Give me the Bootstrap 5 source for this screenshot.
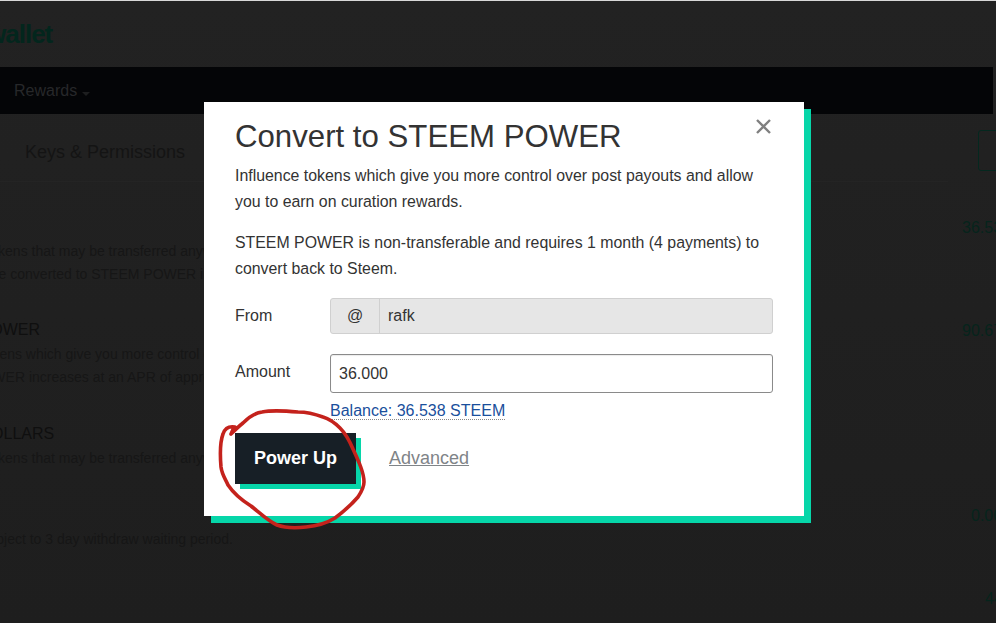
<!DOCTYPE html>
<html lang="en">
<head>
<meta charset="utf-8">
<title>Convert to STEEM POWER</title>
<link href="https://cdn.jsdelivr.net/npm/bootstrap@5.3.0/dist/css/bootstrap.min.css" rel="stylesheet">
<style>
html,body{height:100%;overflow:hidden}
body{background:#1f1f1f;font-family:"Liberation Sans",Arial,sans-serif;color:#333}
.stage{position:relative;width:996px;height:623px;overflow:hidden;border-top:1px solid #d8d8d8;background:linear-gradient(#222222,#1e1e1e)}
.hdr{height:66px;overflow:hidden}
.logo{font-size:26px;font-weight:700;line-height:66px;color:#03261d;margin-left:-14px;letter-spacing:-1px}
.blackbar{height:47px;width:993px;background:#040507;color:#27282a;font-size:16px;line-height:47px;padding-left:14px}
.caret{display:inline-block;width:0;height:0;border-left:4px solid transparent;border-right:4px solid transparent;border-top:4px solid #1d1e1f;margin-left:5px;vertical-align:0}
.bgwrap{height:68px;width:948px;border-bottom:1px solid #242424;padding:25px 0 0 25px;font-size:18px;line-height:27px;color:#141414}
.leftcol{width:700px;margin-left:-80px;color:#161616;font-size:14px;padding-top:58px}
.bgline{height:23px;line-height:23px;white-space:nowrap}
.bghead{font-size:16px;color:#0f0f0f;line-height:26px;height:26px}
.gap1{margin-top:31px}
.gap2{margin-top:32px}
.gap3{margin-top:58px}
.num{font-size:16px;line-height:20px;color:#06241c;white-space:nowrap;position:absolute}
.outlinebtn{position:absolute;left:978px;top:129px;width:40px;height:41px;border:1px solid #04281f;border-radius:3px}
.dlg{position:absolute;left:204px;top:101px;width:600px;height:414px;background:#fff;box-shadow:7px 7px 0 #06d6a9;padding:17px 31px 0 31px}
.dlgtitle{font-size:31.2px;line-height:36px;font-weight:400;margin:0 0 8px;color:#333}
.dlgtext{font-size:15.88px;line-height:26px;margin:0 0 15px;color:#333}
.lastpara{margin-bottom:16px}
.closex{position:absolute;left:552px;top:17px;width:15px;height:15px;display:block;color:#808080}
.frow{display:flex;align-items:flex-start}
.from-row{margin:0 0 20px}
.flabel{width:95px;font-size:16px;line-height:34px;color:#333;padding-top:1px}
.group{flex:1;display:flex;height:36px;border:1px solid #d0d0d0;border-radius:3px;background:#e6e6e6;font-size:16px}
.atbox{width:49px;text-align:center;line-height:34px;border-right:1px solid #d0d0d0}
.fromval{padding-left:8px;line-height:34px}
.amount{flex:1;height:39px;border:1px solid #8a8a8a;border-radius:3px;padding:0 8px;font-size:16px;color:#333;box-shadow:inset 0 1px 1px rgba(0,0,0,.08);outline:0;background:#fff;font-family:inherit}
.bal{margin:8px 0 0 95px;font-size:16px;line-height:19px}
.bal a{color:#1a4f9c;text-decoration:none;border-bottom:1px dotted #888}
.acts{display:flex;align-items:center;margin-top:13px}
.powerbtn{width:121px;height:51px;background:#171f26;color:#fff;border:0;border-radius:0;font-weight:700;font-size:18px;box-shadow:5px 5px 0 #06d6a9;padding:0}
.powerbtn:hover{background:#171f26;color:#fff}
.adv{margin-left:33px;font-size:18px;color:#7f8488}
.scribble{position:absolute;left:0;top:-1px;width:996px;height:623px;pointer-events:none}
</style>
</head>
<body>
<div class="stage">
  <div class="hdr"><div class="logo">wallet</div></div>
  <div class="blackbar">Rewards<span class="caret"></span></div>
  <div class="bgwrap">Keys &amp; Permissions</div>
  <div class="leftcol">
    <div class="bgline">Tradeable tokens that may be transferred anywhere at anytime.</div>
    <div class="bgline">Steem can be converted to STEEM POWER in a process called powering up.</div>
    <div class="bghead gap1">STEEM POWER</div>
    <div class="bgline">Influence tokens which give you more control over post payouts and allow you to earn.</div>
    <div class="bgline">STEEM POWER increases at an APR of approximately 3.07%.</div>
    <div class="bghead gap2">STEEM DOLLARS</div>
    <div class="bgline">Tradeable tokens that may be transferred anywhere at anytime.</div>
    <div class="bgline gap3">Balances subject to 3 day withdraw waiting period.</div>
  </div>
  <div class="outlinebtn"></div>
  <div class="num" style="left:962px;top:217px">36.538</div>
  <div class="num" style="left:962px;top:320px">90.671</div>
  <div class="num" style="left:971px;top:505px">0.000</div>
  <div class="num" style="left:985px;top:588px">44</div>

  <div class="dlg">
    <svg class="closex" viewBox="0 0 15 15" aria-label="Close"><path d="M1 1L14 14M14 1L1 14" stroke="currentColor" stroke-width="2.4" fill="none"/></svg>
    <h4 class="dlgtitle">Convert to STEEM POWER</h4>
    <p class="dlgtext">Influence tokens which give you more control over post payouts and allow you to earn on curation rewards.</p>
    <p class="dlgtext lastpara">STEEM POWER is non-transferable and requires 1 month (4 payments) to convert back to Steem.</p>
    <div class="frow from-row">
      <div class="flabel">From</div>
      <div class="group"><div class="atbox">@</div><div class="fromval">rafk</div></div>
    </div>
    <div class="frow">
      <div class="flabel">Amount</div>
      <input class="amount" value="36.000">
    </div>
    <div class="bal"><a href="#">Balance: 36.538 STEEM</a></div>
    <div class="acts">
      <button class="btn powerbtn" type="button">Power Up</button>
      <a class="adv" href="#">Advanced</a>
    </div>
  </div>

  <svg class="scribble" viewBox="0 0 996 623" fill="none">
    <path d="M231 434C232 431 233 429 235 427C229 426 225 428 223 434C220 442 220 455 221 467C222 475 226 480 228 485C234 494 243 501 251 506C260 513 268 521 277 525C285 528 297 528 306 527C316 526 327 523 335 518C343 512 352 504 358 497C362 491 364 487 364 482C364 473 359 462 353 449C350 442 345 433 340 428C335 423 330 419 323 417C315 414 308 412 298 412C287 411 272 410 262 412C254 413 248 418 243 423C238 427 234 431 231 434" stroke="#c4221c" stroke-width="3.6" stroke-linecap="round" stroke-linejoin="round"/>
  </svg>
</div>
</body>
</html>
